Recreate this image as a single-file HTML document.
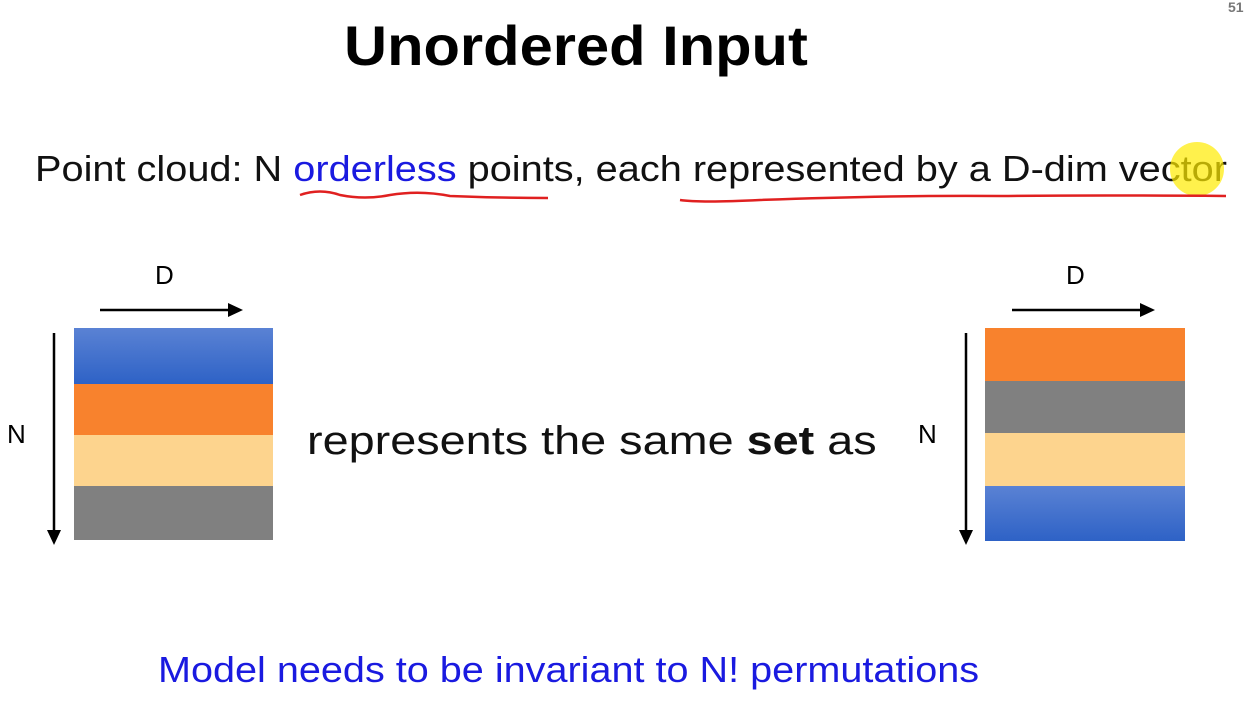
<!DOCTYPE html>
<html><head><style>
body{margin:0;width:1248px;height:707px;background:#fff;position:relative;overflow:hidden;font-family:"Liberation Sans",Arial,sans-serif}
.t{position:absolute;white-space:nowrap;line-height:1;transform-origin:0 0}
</style></head><body>
<div class="t" style="left:344px;top:18px;font-size:56px;font-weight:bold;color:#000;transform:scaleX(1.065)">Unordered Input</div>
<div class="t" style="left:1228px;top:0px;font-size:14px;font-weight:bold;color:#777">51</div>
<div class="t" style="left:35px;top:151px;font-size:36.5px;color:#111;transform:scaleX(1.088)">Point cloud: N <span style="color:#1a1ae0">orderless</span> points, each represented by a D-dim vector</div>
<div style="position:absolute;left:1170px;top:142px;width:54px;height:54px;border-radius:50%;background:rgba(255,235,0,0.7)"></div>
<svg style="position:absolute;left:0;top:0" width="1248" height="707">
<path d="M300 195 Q320 188 340 195 Q365 200 390 195 Q420 190 450 196 Q500 198 548 198" stroke="#e02020" stroke-width="2.5" fill="none"/>
<path d="M680 200 Q700 203 760 200 Q900 195 1000 196 Q1100 195 1226 196" stroke="#e02020" stroke-width="2.5" fill="none"/>
<defs><linearGradient id="b" x1="0" y1="0" x2="0" y2="1"><stop offset="0" stop-color="#5a82d4"/><stop offset="1" stop-color="#2e62c6"/></linearGradient></defs>
<rect x="74" y="328" width="199" height="56" fill="url(#b)"/>
<rect x="74" y="384" width="199" height="51" fill="#f8822d"/>
<rect x="74" y="435" width="199" height="51" fill="#fdd48e"/>
<rect x="74" y="486" width="199" height="54" fill="#808080"/>
<rect x="985" y="328" width="200" height="53" fill="#f8822d"/>
<rect x="985" y="381" width="200" height="52" fill="#808080"/>
<rect x="985" y="433" width="200" height="53" fill="#fdd48e"/>
<rect x="985" y="486" width="200" height="55" fill="url(#b)"/>
<g stroke="#000" stroke-width="2.5">
<line x1="100" y1="310" x2="232" y2="310"/><line x1="54" y1="333" x2="54" y2="532"/>
<line x1="1012" y1="310" x2="1144" y2="310"/><line x1="966" y1="333" x2="966" y2="532"/>
</g>
<polygon points="243,310 228,303 228,317"/><polygon points="54,545 47,530 61,530"/>
<polygon points="1155,310 1140,303 1140,317"/><polygon points="966,545 959,530 973,530"/>
</svg>
<div class="t" style="left:155px;top:262px;font-size:26px">D</div>
<div class="t" style="left:1066px;top:262px;font-size:26px">D</div>
<div class="t" style="left:7px;top:421px;font-size:26px">N</div>
<div class="t" style="left:918px;top:421px;font-size:26px">N</div>
<div class="t" style="left:307px;top:421px;font-size:40px;color:#111;transform:scaleX(1.17)">represents the same <b>set</b> as</div>
<div class="t" style="left:158px;top:652px;font-size:36px;color:#1a1ae0;transform:scaleX(1.10)">Model needs to be invariant to N! permutations</div>
</body></html>
